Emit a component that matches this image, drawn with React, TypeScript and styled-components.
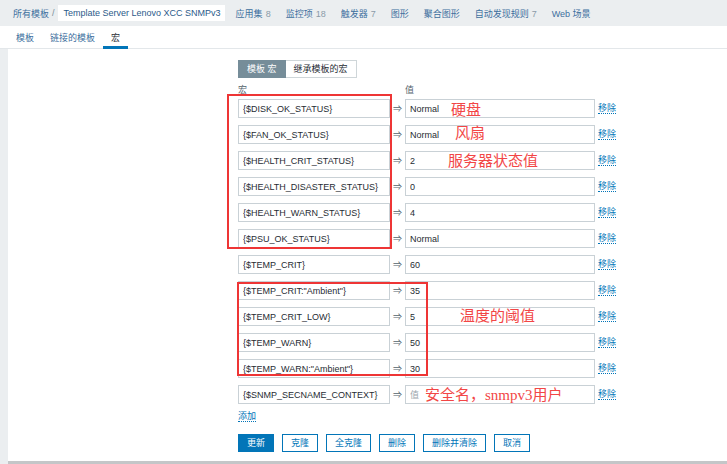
import React from "react";
import styled, { createGlobalStyle } from "styled-components";

const Global = createGlobalStyle`
  html, body { margin: 0; padding: 0; background: #ebeef0; }
  body {
    font-family: "Liberation Sans", Arial, "Noto Sans CJK SC", sans-serif;
    font-size: 9px;
    color: #1f2c33;
  }
  * { box-sizing: border-box; }
`;

const Page = styled.div`
  width: 727px;
  height: 464px;
  background: #ebeef0;
  overflow: hidden;
`;

const Header = styled.div`
  height: 26px;
  display: flex;
  align-items: center;
  padding-left: 13px;
  background: #ebeef0;
`;

const Crumb = styled.span`
  color: #3d6f9e;
`;

const Sep = styled.span`
  color: #768d99;
  margin: 0 3px 0 3px;
`;

const CurrentBox = styled.span`
  background: #fff;
  height: 16px;
  line-height: 16px;
  padding: 0 4px 0 6px;
  color: #2c5a8a;
  margin-right: 11px;
`;

const NavList = styled.div`
  display: flex;
  gap: 15px;
`;

const NavLink = styled.span`
  color: #3d6f9e;
`;

const Count = styled.span`
  color: #8a9ba8;
  margin-left: 3px;
`;

const TabBar = styled.div`
  height: 23px;
  background: #fff;
  border-bottom: 1px solid #e3e7ea;
  display: flex;
  padding-left: 8px;
`;

const Tab = styled.div<{ $active?: boolean }>`
  height: 23px;
  padding: 0 8px;
  display: flex;
  align-items: center;
  color: ${(p) => (p.$active ? "#1f2c33" : "#3d6f9e")};
  border-bottom: 3px solid ${(p) => (p.$active ? "#0275b8" : "transparent")};
  padding-top: 3px;
`;

const Main = styled.div`
  margin-left: 8px;
  height: 415px;
  background: #fff;
  border-bottom: 3px solid #c4c6c8;
  padding: 11px 0 0 230px;
`;

const Segmented = styled.div`
  display: inline-flex;
  height: 18px;
`;

const SegBtn = styled.div<{ $active?: boolean }>`
  height: 18px;
  line-height: 16px;
  padding: 0 8px;
  border: 1px solid ${(p) => (p.$active ? "#768d99" : "#cfd6d9")};
  border-left-width: ${(p) => (p.$active ? "1px" : "0")};
  background: ${(p) => (p.$active ? "#768d99" : "#fff")};
  color: ${(p) => (p.$active ? "#fff" : "#1f2c33")};
`;

const LabelRow = styled.div`
  display: grid;
  grid-template-columns: 167px 190px;
  margin-top: 7px;
  line-height: 11px;
  color: #53636c;
`;

const MacroGrid = styled.div`
  position: relative;
  display: grid;
  grid-template-columns: 152px 15px 190px auto;
  row-gap: 7px;
  align-items: center;
  margin-top: 3px;
  width: 400px;
`;

const Field = styled.input`
  height: 19px;
  width: 100%;
  border: 1px solid #c9d1d6;
  padding: 0 4px;
  font-family: "Liberation Sans", Arial, "Noto Sans CJK SC", sans-serif;
  font-size: 9px;
  color: #1f2c33;
  background: #fff;
  outline: none;
  &::placeholder { color: #9aa6ad; }
`;

const Arrow = styled.span`
  text-align: center;
  color: #53636c;
  font-size: 9px;
`;

const ValueCell = styled.div`
  position: relative;
`;

const Note = styled.span`
  position: absolute;
  top: 50%;
  transform: translateY(-50%);
  white-space: nowrap;
  font-family: "Liberation Serif", "Noto Sans CJK SC", serif;
  font-size: 15px;
  line-height: 16px;
  color: #f24646;
  pointer-events: none;
`;

const Remove = styled.span`
  margin-left: 3px;
  justify-self: start;
  color: #0275b8;
  border-bottom: 1px dotted #0275b8;
  line-height: 10px;
`;

const RedBox = styled.div`
  position: absolute;
  border: 2px solid #ee3535;
  pointer-events: none;
`;

const AddLink = styled.div`
  margin-top: 7px;
  display: inline-block;
  color: #0275b8;
  border-bottom: 1px dotted #0275b8;
  line-height: 10px;
`;

const Buttons = styled.div`
  display: flex;
  gap: 8px;
  margin-top: 12px;
`;

const Button = styled.button<{ $primary?: boolean }>`
  height: 18px;
  padding: 0 8px;
  border: 1px solid #0275b8;
  background: ${(p) => (p.$primary ? "#0275b8" : "#fff")};
  color: ${(p) => (p.$primary ? "#fff" : "#0275b8")};
  font-family: "Liberation Sans", Arial, "Noto Sans CJK SC", sans-serif;
  font-size: 9px;
  line-height: 16px;
  cursor: pointer;
`;

type Row = { macro: string; value: string; note?: string; noteLeft?: number; noteDy?: number };

const rows: Row[] = [
  { macro: "{$DISK_OK_STATUS}", value: "Normal", note: "硬盘", noteLeft: 46, noteDy: 1 },
  { macro: "{$FAN_OK_STATUS}", value: "Normal", note: "风扇", noteLeft: 50, noteDy: -2 },
  { macro: "{$HEALTH_CRIT_STATUS}", value: "2", note: "服务器状态值", noteLeft: 43 },
  { macro: "{$HEALTH_DISASTER_STATUS}", value: "0" },
  { macro: "{$HEALTH_WARN_STATUS}", value: "4" },
  { macro: "{$PSU_OK_STATUS}", value: "Normal" },
  { macro: "{$TEMP_CRIT}", value: "60" },
  { macro: '{$TEMP_CRIT:"Ambient"}', value: "35" },
  { macro: "{$TEMP_CRIT_LOW}", value: "5", note: "温度的阈值", noteLeft: 55, noteDy: -1 },
  { macro: "{$TEMP_WARN}", value: "50" },
  { macro: '{$TEMP_WARN:"Ambient"}', value: "30" },
  { macro: "{$SNMP_SECNAME_CONTEXT}", value: "", note: "安全名，snmpv3用户", noteLeft: 20 },
];

const nav: [string, string?][] = [
  ["应用集", "8"],
  ["监控项", "18"],
  ["触发器", "7"],
  ["图形"],
  ["聚合图形"],
  ["自动发现规则", "7"],
  ["Web 场景"],
];

export default function App() {
  return (
    <Page>
      <Global />
      <Header>
        <Crumb>所有模板</Crumb>
        <Sep>/</Sep>
        <CurrentBox>Template Server Lenovo XCC SNMPv3</CurrentBox>
        <NavList>
          {nav.map(([label, count]) => (
            <NavLink key={label}>
              {label}
              {count && <Count>{count}</Count>}
            </NavLink>
          ))}
        </NavList>
      </Header>
      <TabBar>
        <Tab>模板</Tab>
        <Tab>链接的模板</Tab>
        <Tab $active>宏</Tab>
      </TabBar>
      <Main>
        <Segmented>
          <SegBtn $active>模板 宏</SegBtn>
          <SegBtn>继承模板的宏</SegBtn>
        </Segmented>
        <LabelRow>
          <span>宏</span>
          <span>值</span>
        </LabelRow>
        <MacroGrid>
          {rows.map((r) => (
            <React.Fragment key={r.macro}>
              <Field readOnly defaultValue={r.macro} />
              <Arrow>⇒</Arrow>
              <ValueCell>
                <Field readOnly defaultValue={r.value} placeholder="值" />
                {r.note && (
                  <Note style={{ left: r.noteLeft, marginTop: r.noteDy || 0 }}>{r.note}</Note>
                )}
              </ValueCell>
              <Remove>移除</Remove>
            </React.Fragment>
          ))}
          <RedBox style={{ left: -11, top: -5, width: 165, height: 155 }} />
          <RedBox style={{ left: -1, top: 183, width: 191, height: 94 }} />
        </MacroGrid>
        <AddLink>添加</AddLink>
        <Buttons>
          <Button $primary>更新</Button>
          <Button>克隆</Button>
          <Button>全克隆</Button>
          <Button>删除</Button>
          <Button>删除并清除</Button>
          <Button>取消</Button>
        </Buttons>
      </Main>
    </Page>
  );
}
